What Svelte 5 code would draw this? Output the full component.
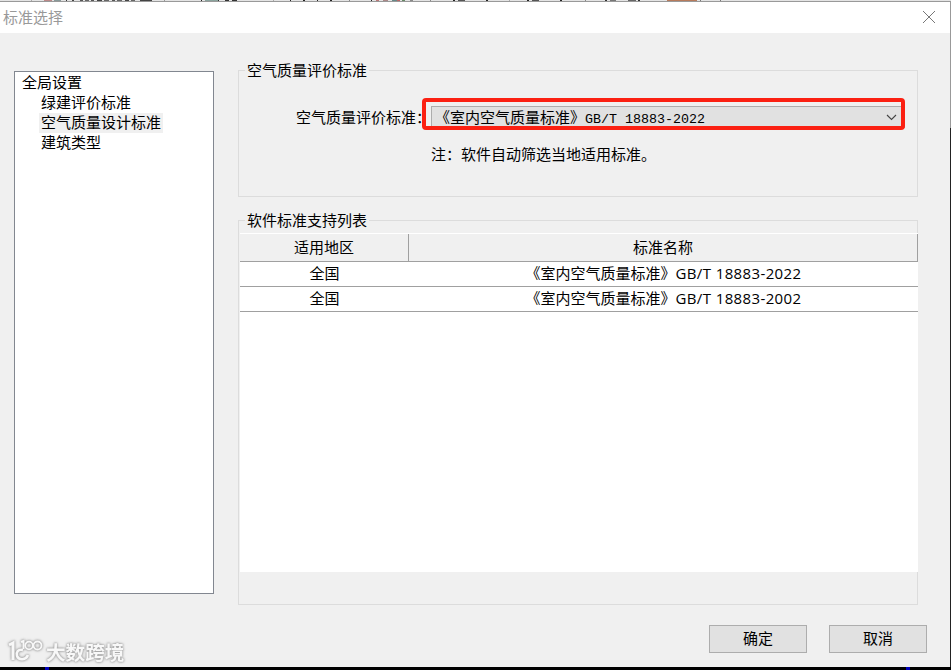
<script>
  const tree = [
    { label: '全局设置', root: true },
    { label: '绿建评价标准' },
    { label: '空气质量设计标准', selected: true },
    { label: '建筑类型' },
  ];
  const rows = [
    { area: '全国', name: '《室内空气质量标准》', code: 'GB/T 18883-2022' },
    { area: '全国', name: '《室内空气质量标准》', code: 'GB/T 18883-2002' },
  ];
  // fragments of the toolbar behind the dialog: [x, width, colour]
  const marks = [
    [31, 1, '#aaa'], [44, 8, '#b88'], [54, 7, '#899'], [66, 1, '#333'], [72, 2, '#444'], [80, 3, '#555'], [85, 4, '#666'],
    [91, 3, '#555'], [97, 5, '#444'], [104, 5, '#666'], [112, 3, '#555'], [117, 5, '#666'], [125, 4, '#444'],
    [131, 4, '#666'], [140, 12, '#444'], [164, 1, '#999'], [201, 1, '#222'], [205, 13, '#8aa39d'],
    [218, 1, '#333'], [225, 4, '#333'], [232, 5, '#333'], [273, 1, '#aaa'], [290, 1, '#222'], [303, 2, '#222'],
    [317, 1, '#222'], [330, 2, '#222'], [349, 1, '#888'], [371, 1, '#222'], [376, 3, '#b77'], [383, 5, '#a88'],
    [392, 5, '#688'], [397, 3, '#b66'], [402, 3, '#686'], [410, 3, '#888'], [430, 1, '#888'], [453, 2, '#222'],
    [458, 7, '#555'], [486, 2, '#222'], [509, 1, '#aaa'], [527, 2, '#222'], [532, 7, '#555'], [560, 2, '#222'],
    [585, 1, '#888'], [605, 2, '#333'], [610, 6, '#777'], [628, 8, '#666'], [638, 2, '#333'], [667, 30, '#b77b5c'],
    [700, 1, '#777'], [720, 1, '#777'],
  ];
</script>

<div class="screen">
  <svg class="behind" width="951" height="2" viewBox="0 0 951 2" shape-rendering="crispEdges">
    <rect width="951" height="2" fill="#e4e4e4" />
    {#each marks as [x, w, c]}<rect {x} y="0" width={w} height="1" fill={c} />{/each}
    <rect y="1" width="951" height="1" fill="#999" />
  </svg>
  <div class="window">
    <header>
      <span>标准选择</span>
      <svg width="14" height="14" viewBox="0 0 14 14"><path d="M1 1L13 13M13 1L1 13" stroke="#777" stroke-width="1" /></svg>
    </header>
    <main>
      <nav>
        {#each tree as n}
          <div class="node" class:root={n.root}><span class:selected={n.selected}>{n.label}</span></div>
        {/each}
      </nav>
      <div class="right">
        <section class="choice">
          <h2>空气质量评价标准</h2>
          <div class="field">
            <label for="std">空气质量评价标准：</label>
            <div class="combo" id="std">
              <span class="value">《室内空气质量标准》<span class="mono">GB/T 18883-2022</span></span>
              <svg width="11" height="7" viewBox="0 0 11 7"><path d="M1 1L5.5 5.5L10 1" fill="none" stroke="#444" stroke-width="1.1" /></svg>
            </div>
            <div class="highlight"></div>
          </div>
          <p>注：软件自动筛选当地适用标准。</p>
        </section>
        <section class="support">
          <h2>软件标准支持列表</h2>
          <div class="table">
            <div class="tr head"><div>适用地区</div><div>标准名称</div></div>
            {#each rows as r}
              <div class="tr"><div>{r.area}</div><div>{r.name}<span class="code">{r.code}</span></div></div>
            {/each}
          </div>
        </section>
      </div>
    </main>
    <footer>
      <button>确定</button>
      <button>取消</button>
    </footer>
  </div>
  <div class="bottom"><i></i><i></i></div>
  <div class="watermark">
    <svg width="38" height="26" viewBox="0 0 38 26" fill="none" stroke="#f8f8f8">
      <path d="M1 7L5 5V22" stroke-width="3" />
      <path d="M15 12C10 11 8 14 9 18C11 23 18 22 20 17" stroke-width="2.6" />
      <path d="M13 4L15.5 3V11" stroke-width="2" />
      <circle cx="21" cy="7.5" r="3.8" stroke-width="1.8" />
      <circle cx="29.5" cy="7.5" r="4" stroke-width="1.8" />
    </svg>
    <span>大数跨境</span>
  </div>
</div>

<style>
  :global(body) { margin: 0; }
  .screen {
    position: relative; width: 951px; height: 670px; overflow: hidden; background: #000;
    font: 15px/20px "Liberation Sans", "Noto Sans CJK SC", sans-serif; color: #000;
    display: flex; flex-direction: column; box-sizing: border-box;
  }
  .behind { display: block; flex: none; }
  .window {
    width: 950px; height: 665px; background: #f0f0f0; display: flex; flex-direction: column;
    box-shadow: 1px 0 #222; position: relative;
  }
  .window::after { content: ''; position: absolute; left: 950px; top: 0; width: 1px; height: 126px; background: #999; }
  header {
    height: 31px; flex: none; background: #fff; color: #999; display: flex; align-items: center;
    justify-content: space-between; padding: 0 14px 1px 3px; box-sizing: border-box;
  }
  header span { padding-top: 1px; }
  main { display: flex; flex: none; height: 572px; padding: 37px 32px 0 14px; gap: 24px; box-sizing: border-box; }
  nav {
    width: 200px; height: 523px; margin-top: 1px; border: 1px solid #828790; background: #fff;
    box-sizing: border-box; padding-top: 1px; flex: none;
  }
  .node { height: 20px; padding-left: 24px; white-space: nowrap; }
  .node.root { padding-left: 5px; }
  .node span { display: inline-block; padding: 0 2px; height: 20px; }
  .selected { background: #f0f0f0; }
  .right { width: 680px; display: flex; flex-direction: column; gap: 23px; }
  section { border: 1px solid #dcdcdc; box-sizing: border-box; }
  .choice { height: 127px; }
  .support { height: 385px; }
  h2 {
    font: inherit; line-height: 22px; width: fit-content; margin: -11px 0 0 6px; padding: 0 2px; background: #f0f0f0;
    height: 20px; white-space: nowrap;
  }
  .field { position: relative; display: flex; margin: 26px 0 0 57px; height: 22px; }
  label { width: 135px; line-height: 23px; white-space: nowrap; }
  .combo {
    width: 474px; height: 22px; box-sizing: border-box; background: #e1e1e1; border: 1px solid #adadad;
    display: flex; justify-content: space-between; align-items: center; padding: 0 7px 0 3px; line-height: 22px;
    white-space: nowrap;
  }
  .value { padding-top: 2px; }
  .mono { font: 13.33px/20px "Liberation Mono", monospace; }
  .highlight {
    position: absolute; left: 126px; top: -8px; width: 483px; height: 32px; box-sizing: border-box;
    border: 4px solid #fb2012; border-radius: 4px;
  }
  p { margin: 17px 0 0 192px; }
  .table { width: 679px; height: 339px; margin: 3px 0 0; padding-left: 1px; box-sizing: border-box; background: #fff; background-clip: content-box; }
  .tr {
    display: grid; grid-template-columns: 169px 509px; height: 25px; line-height: 23px; text-align: center;
    border-bottom: 1px solid #a0a0a0; box-sizing: border-box; white-space: nowrap;
  }
  .head { height: 29px; line-height: 27px; background: #f0f0f0; border-top: 1px solid #fff; }
  .head div { border-right: 1px solid #a0a0a0; }
  .code { font-family: "Open Sans", "Noto Sans", sans-serif; letter-spacing: 0.38px; }
  footer { display: flex; gap: 22px; justify-content: flex-end; padding: 20px 23px 0 0; }
  button {
    width: 98px; height: 28px; border: 1px solid #adadad; background: #e1e1e1; font: inherit; padding: 0; color: #000;
  }
  .bottom { height: 3px; display: flex; justify-content: space-between; padding: 0 41px 0 45px; }
  .bottom i { width: 4px; height: 3px; background: #0000b8; }
  .watermark {
    position: absolute; left: 8px; top: 638px; display: flex; color: #f8f8f8; filter: drop-shadow(0 0 1px #999) drop-shadow(0 0 1px #bbb);
    font: bold 19.6px/28px "Noto Sans CJK SC", sans-serif; white-space: nowrap;
  }
</style>
